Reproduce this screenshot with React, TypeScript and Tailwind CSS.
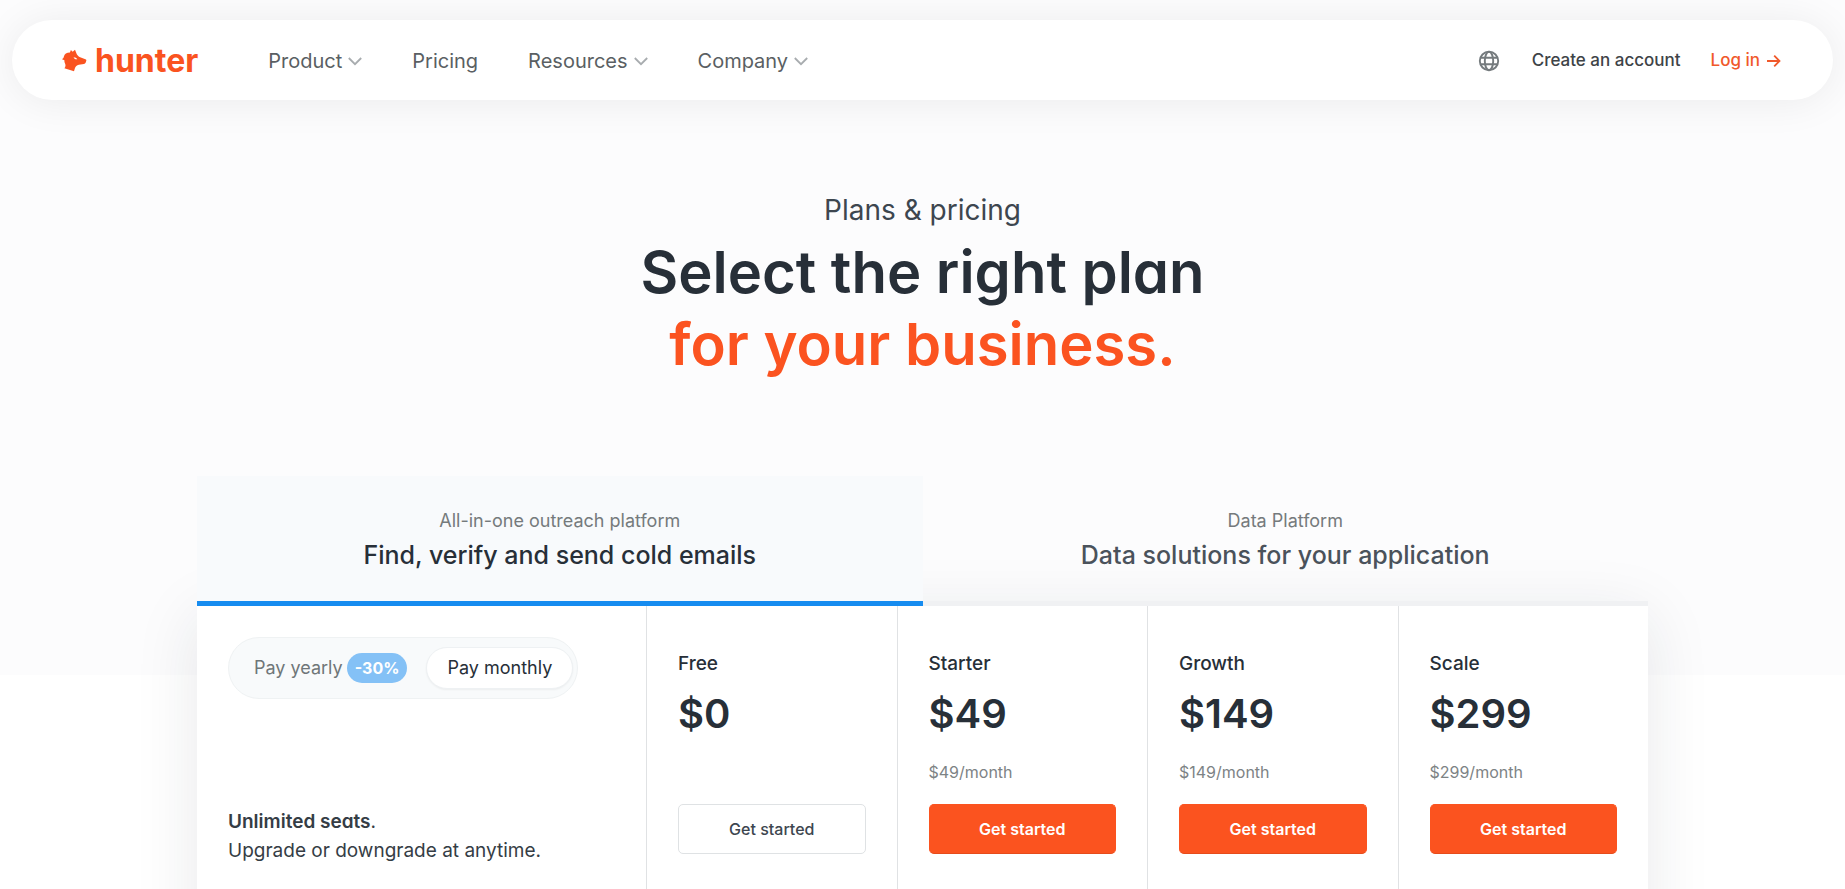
import { useState } from 'react';

interface Plan {
  name: string;
  price: string;
  perMonth?: string;
}

const menu = [
  { label: 'Product', dropdown: true },
  { label: 'Pricing', dropdown: false },
  { label: 'Resources', dropdown: true },
  { label: 'Company', dropdown: true },
];

const tabs = [
  { kicker: 'All-in-one outreach platform', title: 'Find, verify and send cold emails' },
  { kicker: 'Data Platform', title: 'Data solutions for your application' },
];

const plans: Plan[] = [
  { name: 'Free', price: '$0' },
  { name: 'Starter', price: '$49', perMonth: '$49/month' },
  { name: 'Growth', price: '$149', perMonth: '$149/month' },
  { name: 'Scale', price: '$299', perMonth: '$299/month' },
];

function Logo() {
  return (
    <a href="#" className="flex items-center gap-2 pt-0.5 text-[#fa5320]">
      <svg width="25" height="24" viewBox="0 0 25 24" fill="currentColor" aria-hidden="true">
        <path
          fillRule="evenodd"
          d="M8.900 1 10.700 2.800 13 .8 14.800 5.200C15.700 6.800 17 8 18.800 8.600L23.400 10.200C24.200 10.500 24.500 11 24.300 11.800L23.700 13.600C23.400 14.500 22.800 15 21.900 15.100L16.800 15.700C14.800 16.200 13.500 17.300 12.900 19.200L12 22.200 2.400 19.200C3.600 17.800 3.800 16.200 3.200 14.900 2.500 13.600 2.200 12.400 2.400 11.200L0 10.300C1.300 9.400 1.700 8.600 1.900 7.600 2.500 5 4.600 3.600 7.900 3.600ZM11.600 8.200C12.200 9.900 13.600 10.600 15.400 10.200 14.600 8.900 13.300 8.200 11.600 8.200Z"
        />
      </svg>
      <span className="text-[32px] leading-8 font-bold">hunter</span>
    </a>
  );
}

function Caret() {
  return (
    <svg width="14" height="9" viewBox="0 0 14 9" fill="none" stroke="currentColor" strokeWidth="1.8" className="text-[#a8acaf]" aria-hidden="true">
      <path d="M.8 1 7 7.200 13.200 1" />
    </svg>
  );
}

function GlobeIcon() {
  return (
    <svg width="22" height="22" viewBox="0 0 22 22" fill="none" stroke="currentColor" strokeWidth="1.900" aria-hidden="true">
      <circle cx="11" cy="11" r="9.200" />
      <ellipse cx="11" cy="11" rx="4.200" ry="9.200" />
      <path d="M2.600 7.700h16.800M2.600 14.300h16.800" />
    </svg>
  );
}

function Navbar() {
  return (
    <header className="px-3 pt-5">
      <div className="flex h-20 items-center rounded-full bg-white pr-[52px] pl-[50px] shadow-[0_2px_40px_rgba(0,0,0,0.07)]">
        <Logo />
        <nav className="ml-[70px] flex items-center gap-[50px] pt-0.5 text-xl text-[#5a5f63]">
          {menu.map((item) =>
            item.dropdown ? (
              <button key={item.label} type="button" className="flex items-center gap-1.5">
                {item.label}
                <Caret />
              </button>
            ) : (
              <a key={item.label} href="#">{item.label}</a>
            )
          )}
        </nav>
        <div className="ml-auto flex items-center gap-[30px] pt-0.5 text-[17px] font-medium">
          <button type="button" aria-label="Language" className="pr-0.5 text-[#757b7e]">
            <GlobeIcon />
          </button>
          <a href="#" className="text-[#3e4347]">Create an account</a>
          <a href="#" className="flex items-center gap-1.5 text-[#f0592b]">
            Log in
            <svg width="15" height="14" viewBox="0 0 15 14" fill="none" stroke="currentColor" strokeWidth="1.8" aria-hidden="true">
              <path d="M1 7h12.500M8.200 1.700 13.500 7l-5.300 5.300" />
            </svg>
          </a>
        </div>
      </div>
    </header>
  );
}

function Billing() {
  const [period, setPeriod] = useState('monthly');
  const pill = 'relative flex h-[42px] cursor-pointer items-center rounded-full border px-5';
  const on = 'border-[#eef1f3] bg-white text-[#272f38] shadow-xs';
  const off = 'border-transparent text-[#6f7678]';
  const radio = 'absolute inset-0 cursor-pointer appearance-none rounded-full';
  return (
    <div
      role="radiogroup"
      aria-label="Billing period"
      className="flex h-[62px] w-fit items-center gap-1.5 rounded-full border border-[#eff2f3] bg-[#f8fafb] px-1 text-lg"
    >
      <label className={`${pill} ${period === 'yearly' ? on : off}`}>
        <input type="radio" name="period" className={radio} checked={period === 'yearly'} onChange={() => setPeriod('yearly')} />
        Pay yearly
        <span className="-mr-2 ml-1 rounded-full bg-[#84c1f6] px-2 py-[3px] text-base font-bold text-white">-30%</span>
      </label>
      <label className={`${pill} ${period === 'monthly' ? on : off}`}>
        <input type="radio" name="period" className={radio} checked={period === 'monthly'} onChange={() => setPeriod('monthly')} />
        Pay monthly
      </label>
    </div>
  );
}

function PlanColumn({ plan }: { plan: Plan }) {
  const btn = 'h-[50px] w-full rounded-[5px] border text-base';
  const paid = 'border-[#fb531f] border-b-[#e54c1c] bg-[#fb531f] font-semibold text-white';
  const free = 'border-[#dfe2e4] bg-white font-medium text-[#3d464f]';
  return (
    <section className="border-l border-[#e0e2e4] px-[31px] pt-11 pb-24">
      <h2 className="text-[19px] leading-7 font-medium text-[#272f38]">{plan.name}</h2>
      <p className="mt-2.5 text-[40px] leading-[52px] font-semibold text-[#272f38]">{plan.price}</p>
      <p className="mt-5 h-6 text-base text-[#7d8385]">{plan.perMonth}</p>
      <button type="button" className={`mt-5 ${btn} ${plan.perMonth ? paid : free}`}>Get started</button>
    </section>
  );
}

export default function App() {
  const [tab, setTab] = useState(0);
  return (
    <div className="min-h-screen bg-white bg-[linear-gradient(#fcfcfd,#fcfcfd)] bg-[length:100%_675px] bg-no-repeat font-['Inter',sans-serif]">
      <Navbar />

      <div className="pt-[90px] text-center">
        <p className="text-[28px] leading-10 text-[#3d464f]">Plans &amp; pricing</p>
        <h1 className="mt-1.5 text-[58px] leading-[72px] font-semibold text-[#272f38] [font-feature-settings:'cv11']">
          Select the right plan
          <span className="block text-[#fb5320]">for your business.</span>
        </h1>
      </div>

      <main className="mx-auto mt-24 max-w-[1451px]">
        <div role="tablist" className="relative grid grid-cols-2">
          {tabs.map((t, i) => (
            <button
              key={t.title}
              type="button"
              role="tab"
              aria-selected={tab === i}
              onClick={() => setTab(i)}
              className={`relative border-b-[5px] pt-[33px] pb-7 text-center ${tab === i ? 'z-10 border-[#168cf0] bg-[#f8fafc]' : 'border-[#f0f1f3]'}`}
            >
              <span className="block text-lg leading-6 text-[#757a7c]">{t.kicker}</span>
              <span className={`mt-1 block text-[25px] leading-9 font-medium ${tab === i ? 'text-[#272f38]' : 'text-[#4a525b]'}`}>{t.title}</span>
            </button>
          ))}
        </div>

        <div className="grid grid-cols-[449px_repeat(4,1fr)] bg-white shadow-[0_10px_60px_rgba(30,35,45,0.1)]">
          <div className="px-[31px] pt-[31px]">
            <Billing />
            <p className="mt-[108px] text-[19px] leading-[29px] text-[#353d45]">
              <strong className="font-semibold [font-feature-settings:'cv11']">Unlimited seats</strong>.
              <br />
              Upgrade or downgrade at anytime.
            </p>
          </div>
          {plans.map((plan) => (
            <PlanColumn key={plan.name} plan={plan} />
          ))}
        </div>
      </main>
    </div>
  );
}
